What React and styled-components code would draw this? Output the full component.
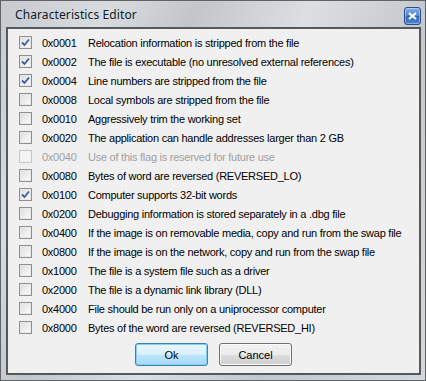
import React from "react";
import styled, { createGlobalStyle } from "styled-components";

const GlobalStyle = createGlobalStyle`
  html, body { margin: 0; padding: 0; background: #ffffff; }
  * { box-sizing: border-box; }
`;

const flags = [
  { hex: "0x0001", text: "Relocation information is stripped from the file", checked: true },
  { hex: "0x0002", text: "The file is executable (no unresolved external references)", checked: true },
  { hex: "0x0004", text: "Line numbers are stripped from the file", checked: true },
  { hex: "0x0008", text: "Local symbols are stripped from the file" },
  { hex: "0x0010", text: "Aggressively trim the working set" },
  { hex: "0x0020", text: "The application can handle addresses larger than 2 GB" },
  { hex: "0x0040", text: "Use of this flag is reserved for future use", disabled: true },
  { hex: "0x0080", text: "Bytes of word are reversed (REVERSED_LO)" },
  { hex: "0x0100", text: "Computer supports 32-bit words", checked: true },
  { hex: "0x0200", text: "Debugging information is stored separately in a .dbg file" },
  { hex: "0x0400", text: "If the image is on removable media, copy and run from the swap file" },
  { hex: "0x0800", text: "If the image is on the network, copy and run from the swap file" },
  { hex: "0x1000", text: "The file is a system file such as a driver" },
  { hex: "0x2000", text: "The file is a dynamic link library (DLL)" },
  { hex: "0x4000", text: "File should be run only on a uniprocessor computer" },
  { hex: "0x8000", text: "Bytes of the word are reversed (REVERSED_HI)" },
];

const Window = styled.div`
  width: 426px;
  height: 381px;
  border: 1px solid #5f6468;
  background: linear-gradient(115deg, #c6cace 0%, #d9dcdf 18%, #c2c6ca 33%, #dcdfe2 52%, #c4c8cc 72%, #d5d8db 100%);
  display: flex;
  flex-direction: column;
  padding: 0 4px 5px 5px;
`;

const TitleBar = styled.div`
  height: 26px;
  display: flex;
  align-items: center;
  justify-content: space-between;
  padding: 0 0 0 9px;
`;

const Title = styled.span`
  font-family: "Noto Sans", "DejaVu Sans", sans-serif;
  font-size: 12px;
  color: #101c2a;
  letter-spacing: 0.1px;
`;

const CloseButton = styled.div`
  width: 17px;
  height: 18px;
  margin-top: 3px;
  border: 1px solid #2c4f86;
  border-radius: 3px;
  background: linear-gradient(#86aee6 0%, #5283cc 48%, #3468b6 52%, #4a86d4 100%);
  box-shadow: inset 0 0 0 1px rgba(255,255,255,0.35);
  display: flex;
  align-items: center;
  justify-content: center;
`;

const Client = styled.div`
  flex: 1;
  border: 2px solid #55595e;
  background: #f0f0f0;
  display: flex;
  flex-direction: column;
  padding: 4px 0 0 11px;
`;

const Row = styled.div`
  height: 19px;
  display: flex;
  align-items: center;
  font-family: "Liberation Sans", Arial, sans-serif;
  font-size: 11px;
  letter-spacing: -0.25px;
  color: ${p => (p.$disabled ? "#a0a0a0" : "#000000")};
`;

const Box = styled.span`
  width: 13px;
  height: 13px;
  border: 1px solid ${p => (p.$disabled ? "#c8c8c8" : "#8f8f8f")};
  background: ${p =>
    p.$disabled
      ? "#f4f4f4"
      : "linear-gradient(135deg, #dcdcdc 0%, #f0f0f0 60%, #fbfbfb 100%)"};
  box-shadow: inset 0 0 0 1px ${p => (p.$disabled ? "#f0f0f0" : "#e8e8e8")};
  display: flex;
  align-items: center;
  justify-content: center;
  flex: none;
`;

const Hex = styled.span`
  width: 46px;
  margin-left: 10px;
  flex: none;
`;

const Desc = styled.span`
  white-space: nowrap;
`;

const Buttons = styled.div`
  display: flex;
  justify-content: center;
  gap: 11px;
  margin-top: 6px;
  padding-right: 11px;
`;

const Button = styled.button`
  width: 73px;
  height: 23px;
  border-radius: 3px;
  border: 1px solid ${p => (p.$default ? "#3c7fb1" : "#707070")};
  background: ${p =>
    p.$default
      ? "linear-gradient(#eaf6fd 0%, #d9f0fc 50%, #bee6fd 51%, #a7d9f5 100%)"
      : "linear-gradient(#f2f2f2 0%, #ebebeb 50%, #dddddd 51%, #cfcfcf 100%)"};
  box-shadow: inset 0 0 0 1px ${p => (p.$default ? "#7ed2f7" : "#fcfcfc")};
  font-family: "Liberation Sans", Arial, sans-serif;
  font-size: 11px;
  color: #000;
  padding: 0;
`;

function Check() {
  return (
    <svg width="9" height="9" viewBox="0 0 9 9">
      <path d="M1 4.5 L3.5 7 L8 1.5" fill="none" stroke="#3d5a9c" strokeWidth="1.8" />
    </svg>
  );
}

export default function App() {
  return (
    <>
      <GlobalStyle />
      <Window>
        <TitleBar>
          <Title>Characteristics Editor</Title>
          <CloseButton>
            <svg width="9" height="8" viewBox="0 0 9 8">
              <path d="M1 1 L8 7 M8 1 L1 7" stroke="#ffffff" strokeWidth="2" />
            </svg>
          </CloseButton>
        </TitleBar>
        <Client>
          {flags.map(f => (
            <Row key={f.hex} $disabled={f.disabled}>
              <Box $disabled={f.disabled}>{f.checked && <Check />}</Box>
              <Hex>{f.hex}</Hex>
              <Desc>{f.text}</Desc>
            </Row>
          ))}
          <Buttons>
            <Button $default>Ok</Button>
            <Button>Cancel</Button>
          </Buttons>
        </Client>
      </Window>
    </>
  );
}
